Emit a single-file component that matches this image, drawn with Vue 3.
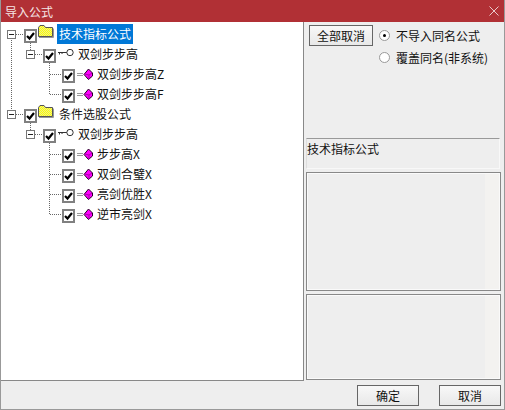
<script setup>
const rows = [
  { id: 1, level: 0, kind: 'folder', text: '技术指标公式', selected: true, exp: true },
  { id: 2, level: 1, kind: 'key', text: '双剑步步高', exp: true },
  { id: 3, level: 2, kind: 'gem', text: '双剑步步高Z' },
  { id: 4, level: 2, kind: 'gem', text: '双剑步步高F' },
  { id: 5, level: 0, kind: 'folder', text: '条件选股公式', exp: true },
  { id: 6, level: 1, kind: 'key', text: '双剑步步高', exp: true },
  { id: 7, level: 2, kind: 'gem', text: '步步高X' },
  { id: 8, level: 2, kind: 'gem', text: '双剑合璧X' },
  { id: 9, level: 2, kind: 'gem', text: '亮剑优胜X' },
  { id: 10, level: 2, kind: 'gem', text: '逆市亮剑X' }
]
</script>

<template>
  <div class="win">
    <header class="title">
      <span>导入公式</span>
      <svg class="close" width="10" height="10" viewBox="0 0 10 10"><path d="M0.5 0.5L9.5 9.5M9.5 0.5L0.5 9.5" stroke="#e9c9ca" fill="none"/></svg>
    </header>
    <main class="body">
      <section class="tree">
        <svg class="lines" width="100" height="230" viewBox="0 0 100 230">
          <g stroke="#666" stroke-dasharray="1 1" fill="none" shape-rendering="crispEdges">
            <path d="M11.5 40V110M16 34.5H24M16 114.5H24"/>
            <path d="M30.5 43V50M35 54.5H43M30.5 123V130M35 134.5H43"/>
            <path d="M49.5 63V94.5H62M49.5 74.5H62"/>
            <path d="M49.5 143V214.5H62M49.5 154.5H62M49.5 174.5H62M49.5 194.5H62"/>
          </g>
        </svg>
        <div v-for="r in rows" :key="r.id" class="row" :class="'lv' + r.level">
          <span v-if="r.exp" class="exp"><i></i></span>
          <span class="chk">
            <svg width="9" height="10" viewBox="0 0 9 10"><path d="M1 5L3.5 7.5L8 2" stroke="#000" stroke-width="2.2" fill="none"/></svg>
          </span>
          <svg v-if="r.kind === 'folder'" class="ic folder" width="16" height="13" viewBox="0 0 16 13">
            <defs>
              <pattern :id="'dith' + r.id" width="2" height="2" patternUnits="userSpaceOnUse">
                <rect width="2" height="2" fill="#ffff00"/>
                <rect width="1" height="1" fill="#ecec90"/>
                <rect x="1" y="1" width="1" height="1" fill="#ecec90"/>
              </pattern>
            </defs>
            <path d="M0.5 11.5V2.5L2 0.5H6L7.5 2.5H14.5V11.5Z" :fill="'url(#dith' + r.id + ')'" stroke="#555"/>
            <path d="M1 12.5H15.5V3.5" stroke="#999" fill="none"/>
          </svg>
          <svg v-else-if="r.kind === 'key'" class="ic key" width="16" height="8" viewBox="0 0 16 8">
            <path d="M0 3.5H9M1.5 3.5V5.5M4 3.5V5" stroke="#333" fill="none"/>
            <circle cx="12" cy="3.5" r="3.2" fill="#fff" stroke="#333"/>
          </svg>
          <svg v-else class="ic gem" width="16" height="12" viewBox="0 0 16 12">
            <path d="M0 5.5H6M0 7.5H6" stroke="#999" fill="none"/>
            <path d="M7 6.5L11.5 1L15.5 5V8L11.5 11.5Z" fill="#f0f" stroke="#202"/>
            <path d="M7.5 6L12 7L15 5M12 7V11" stroke="#a0a" fill="none"/>
          </svg>
          <span class="label" :class="{ sel: r.selected }">{{ r.text }}</span>
        </div>
      </section>
      <aside class="side">
        <div class="top">
          <button class="btn all">全部取消</button>
          <div class="radios">
            <label class="radio"><span class="dot on"></span>不导入同名公式</label>
            <label class="radio"><span class="dot"></span>覆盖同名(非系统)</label>
          </div>
        </div>
        <div class="info">技术指标公式</div>
        <div class="box one"></div>
        <div class="box two"></div>
      </aside>
    </main>
    <footer class="foot">
      <button class="btn act">确定</button>
      <button class="btn act">取消</button>
    </footer>
  </div>
</template>

<style>
html, body { margin: 0; background: #eeeeee; }
</style>

<style scoped>
.win {
  width: 505px; height: 410px; box-sizing: border-box;
  display: flex; flex-direction: column;
  background: #eeeeee; border-left: 1px solid #999; border-right: 1px solid #999; border-bottom: 1px solid #999;
  font: 12px "Noto Sans CJK SC", "Liberation Sans", sans-serif; color: #111;
  overflow: hidden;
}
.title {
  height: 22px; margin: 0 -1px; flex: none; padding: 0 6px 0 5px;
  display: flex; align-items: center; justify-content: space-between;
  background: #b13035; color: #f5e6e6; font-size: 12px;
}
.body { height: 359px; flex: none; display: flex; }
.tree {
  position: relative; width: 304px; flex: none; box-sizing: border-box;
  background: #fff; border-right: 1px solid #888; border-bottom: 1px solid #888;
  padding-top: 2px; border-left: 1px solid #888;
  margin-left: -1px;
}
.lines { position: absolute; left: -1px; top: -22px; pointer-events: none; }
.row { position: relative; height: 20px; display: flex; align-items: center; }
.lv0 { padding-left: 6px; }
.lv1 { padding-left: 25px; }
.lv2 { padding-left: 61px; }
.exp {
  width: 9px; height: 9px; box-sizing: border-box; border: 1px solid #777; background: #fff;
  display: flex; align-items: center; justify-content: center; margin-right: 8px;
}
.exp i { width: 5px; height: 1px; background: #222; }
.chk {
  width: 13px; height: 14px; box-sizing: border-box; border: 2px solid #808080; background: #fff;
  display: flex; align-items: center; justify-content: center; flex: none;
  align-self: flex-start; margin-top: 5px;
}
.ic { flex: none; }
.folder { margin: -5px 0 0 1px; }
.key { margin: -3px 0 0 2px; }
.gem { margin: 0 0 0 2px; }
.label { margin-left: 2px; padding: 0 2px; line-height: 20px; white-space: nowrap; }
.folder + .label { margin-left: 3px; }
.sel { background: #0078d7; color: #fff; }
.side { flex: 1; display: flex; flex-direction: column; padding: 3px 3px 0 2px; box-sizing: border-box; }
.top { display: flex; height: 113px; flex: none; padding-left: 3px; }
.btn {
  font: inherit; color: #111; padding: 0; box-sizing: border-box; height: 21px;
  border: 1px solid #666; background: linear-gradient(#f8f8f8, #e8e8e8);
}
.all { width: 64px; }
.radios { margin-left: 6px; display: flex; flex-direction: column; gap: 2px; }
.radio { display: flex; align-items: center; height: 20px; white-space: nowrap; }
.dot {
  width: 11px; height: 11px; box-sizing: border-box; border-radius: 50%; background: #fff;
  border: 1px solid #999; margin-right: 6px; position: relative; flex: none;
}
.dot.on::after {
  content: ""; position: absolute; left: 3px; top: 3px; width: 3px; height: 3px; border-radius: 50%; background: #000;
}
.info {
  height: 31px; flex: none; box-sizing: border-box; width: 194px;
  border-top: 1px solid #999; border-left: 1px solid #ddd; border-right: 1px solid #f8f8f8; background: #eeeeee; padding: 0; line-height: 20px;
  border-bottom: 1px solid #f8f8f8;
}
.box { box-sizing: border-box; width: 195px; border: 1px solid #888; box-shadow: inset 0 0 0 1px #fafafa; background: linear-gradient(90deg, #eeeeee 92%, #f3f2f0 92%); flex: none; }
.one { height: 119px; margin-top: 3px; }
.two { height: 86px; margin-top: 3px; }
.foot { flex: 1; display: flex; justify-content: flex-end; gap: 20px; padding: 4px 3px 0 0; }
.act { width: 62px; }
</style>
